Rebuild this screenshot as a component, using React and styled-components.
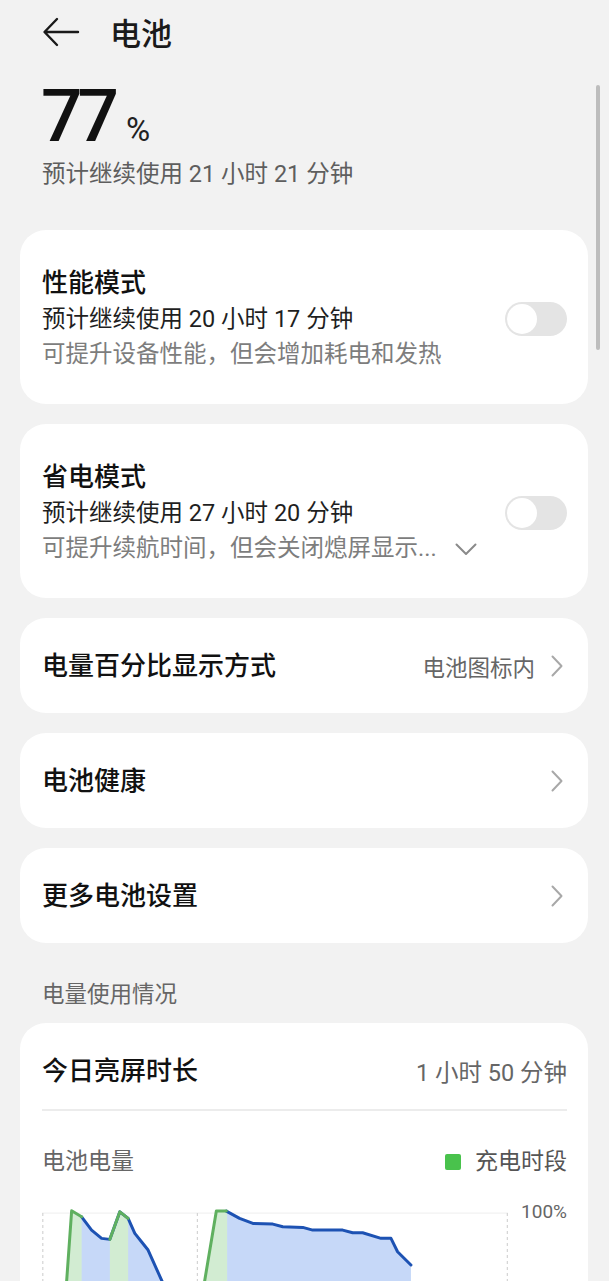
import React from "react";
import styled, { createGlobalStyle } from "styled-components";

const GlobalStyle = createGlobalStyle`
  html, body {
    margin: 0;
    padding: 0;
    overflow: hidden;
    background: #f2f2f2;
  }
  body {
    font-family: Roboto, "Noto Sans CJK SC", sans-serif;
    -webkit-font-smoothing: antialiased;
  }
`;

const modes = [
  {
    title: "性能模式",
    est: "预计继续使用 20 小时 17 分钟",
    desc: "可提升设备性能，但会增加耗电和发热",
    more: false,
  },
  {
    title: "省电模式",
    est: "预计继续使用 27 小时 20 分钟",
    desc: "可提升续航时间，但会关闭熄屏显示...",
    more: true,
  },
];

const links = [
  { label: "电量百分比显示方式", value: "电池图标内" },
  { label: "电池健康" },
  { label: "更多电池设置" },
];

const BackArrow = () => (
  <svg width="38" height="30" viewBox="0 0 38 30">
    <path
      d="M36 15 H3 M15 2 L2.5 15 L15 28"
      fill="none"
      stroke="#1a1a1a"
      strokeWidth="2.4"
      strokeLinecap="round"
      strokeLinejoin="round"
    />
  </svg>
);

const ChevronRight = () => (
  <svg width="12" height="22" viewBox="0 0 12 22">
    <path
      d="M1.5 1.5 L10.5 11 L1.5 20.5"
      fill="none"
      stroke="#a8a8a8"
      strokeWidth="2"
      strokeLinecap="round"
      strokeLinejoin="round"
    />
  </svg>
);

const ChevronDown = () => (
  <svg width="22" height="13" viewBox="0 0 22 13">
    <path
      d="M1.5 1.5 L11 11 L20.5 1.5"
      fill="none"
      stroke="#8a8a8a"
      strokeWidth="2"
      strokeLinecap="round"
      strokeLinejoin="round"
    />
  </svg>
);

const BLUE = "#1d52b3";
const GREEN = "#5fb05f";
const pts = (a) => a.map((p) => p.join(",")).join(" ");

const seg1 = [
  [20.5, 140], [29.7, 10.7], [39.7, 16.7], [49.7, 30], [59.7, 38.3], [68, 39.3],
  [78, 11.7], [86.3, 18.3], [93, 33.3], [99.7, 41.7], [106.3, 50], [119.7, 80], [146.5, 140],
];
const seg2 = [
  [153.1, 140], [174.7, 11], [184.7, 11], [198, 18.3], [211.3, 23.3], [231.3, 24],
  [241.3, 26.7], [261.3, 27.3], [271.3, 30], [301.3, 30], [311.3, 32.7], [321.3, 32.7],
  [339.7, 38.3], [349.7, 38.3], [356.3, 51.7], [369.7, 65],
];

const BatteryChart = () => (
  <svg width="468" height="140" viewBox="0 0 468 140">
    <line x1="0" y1="13" x2="467" y2="13" stroke="#efefef" strokeWidth="1" />
    {[0.8, 155.7, 466.3].map((x) => (
      <line key={x} x1={x} y1="13" x2={x} y2="140" stroke="#d4d4d4" strokeWidth="1.2" strokeDasharray="3 3" />
    ))}
    <polygon points={pts(seg1)} fill="#c6d8f8" />
    <polygon points={pts([...seg2, [369.7, 140]])} fill="#c6d8f8" />
    <polygon points={pts([[20.5, 140], [29.7, 10.7], [39.7, 16.7], [39.7, 140]])} fill="#d2ecd2" />
    <polygon points={pts([[68, 140], [68, 39.3], [78, 11.7], [86.3, 18.3], [86.3, 140]])} fill="#d2ecd2" />
    <polygon points={pts([[153.1, 140], [174.7, 11], [185.5, 11], [185.5, 140]])} fill="#d2ecd2" />
    <g fill="none" strokeWidth="3" strokeLinejoin="round" strokeLinecap="round">
      <polyline points={pts(seg1.slice(2))} stroke={BLUE} />
      <polyline points={pts(seg2.slice(2))} stroke={BLUE} />
      <polyline points={pts(seg1.slice(0, 3))} stroke={GREEN} />
      <polyline points={pts(seg1.slice(5, 8))} stroke={GREEN} />
      <polyline points={pts(seg2.slice(0, 3))} stroke={GREEN} />
    </g>
  </svg>
);

const App = () => {
  return (
    <Page>
      <GlobalStyle />
      <Scrollbar />
      <Header>
        <BackArrow />
        <HeaderTitle>电池</HeaderTitle>
      </Header>

      <Hero>
        <Level>77</Level>
        <Percent>%</Percent>
      </Hero>
      <HeroSub>预计继续使用 21 小时 21 分钟</HeroSub>

      <Cards>
        {modes.map((m) => (
          <ModeCard key={m.title}>
            <ModeText>
              <CardTitle>{m.title}</CardTitle>
              <Estimate>{m.est}</Estimate>
              <Desc>
                {m.desc}
                {m.more && (
                  <MoreIcon>
                    <ChevronDown />
                  </MoreIcon>
                )}
              </Desc>
            </ModeText>
            <Toggle>
              <Knob />
            </Toggle>
          </ModeCard>
        ))}

        {links.map((l) => (
          <LinkCard key={l.label}>
            <CardTitle>{l.label}</CardTitle>
            <LinkRight>
              {l.value && <LinkValue>{l.value}</LinkValue>}
              <ChevronRight />
            </LinkRight>
          </LinkCard>
        ))}
      </Cards>

      <SectionLabel>电量使用情况</SectionLabel>

      <UsageCard>
        <UsageRow>
          <CardTitle>今日亮屏时长</CardTitle>
          <UsageValue>1 小时 50 分钟</UsageValue>
        </UsageRow>
        <Divider />
        <ChartHead>
          <ChartLabel>电池电量</ChartLabel>
          <Legend>
            <Swatch />
            充电时段
          </Legend>
        </ChartHead>
        <ChartRow>
          <BatteryChart />
          <AxisLabel>100%</AxisLabel>
        </ChartRow>
      </UsageCard>
    </Page>
  );
};

const Page = styled.div`
  position: relative;
  padding: 0 21px 0 20px;
  color: #1a1a1a;
`;

const Scrollbar = styled.div`
  position: absolute;
  top: 85px;
  right: 9px;
  width: 4px;
  height: 265px;
  border-radius: 2px;
  background: #bdbdbd;
`;

const Header = styled.div`
  height: 64px;
  display: flex;
  align-items: center;
  padding-left: 22px;
`;

const HeaderTitle = styled.div`
  margin-left: 30px;
  font-size: 31px;
  font-weight: 500;
  line-height: 40px;
  font-family: "Noto Sans CJK SC", sans-serif;
`;

const Hero = styled.div`
  display: flex;
  align-items: baseline;
  padding-left: 21px;
  margin-top: 16px;
`;

const Level = styled.span`
  font-family: Roboto, sans-serif;
  font-size: 73px;
  font-weight: 500;
  line-height: 73px;
  letter-spacing: -5px;
  color: #111;
`;

const Percent = styled.span`
  margin-left: 12px;
  font-family: Roboto, sans-serif;
  font-size: 33px;
  color: #222;
`;

const HeroSub = styled.div`
  padding-left: 22px;
  margin-top: 4px;
  font-size: 23.5px;
  line-height: 34px;
  color: #5e5e5e;
`;

const Cards = styled.div`
  margin-top: 39px;
  display: flex;
  flex-direction: column;
  gap: 20px;
`;

const Card = styled.div`
  background: #fff;
  border-radius: 26px;
`;

const ModeCard = styled(Card)`
  display: flex;
  align-items: center;
  justify-content: space-between;
  padding: 35px 21px 32px 22px;
`;

const ModeText = styled.div`
  display: flex;
  flex-direction: column;
`;

const CardTitle = styled.div`
  font-size: 26px;
  font-weight: 500;
  line-height: 36px;
  color: #111;
`;

const Estimate = styled.div`
  font-size: 23.5px;
  line-height: 36px;
  color: #1f1f1f;
`;

const Desc = styled.div`
  display: flex;
  align-items: center;
  font-size: 23.5px;
  line-height: 35px;
  color: #7d7d7d;
`;

const MoreIcon = styled.span`
  display: inline-flex;
  margin-left: 18px;
  margin-top: 2px;
`;

const Toggle = styled.div`
  width: 62px;
  height: 34px;
  border-radius: 17px;
  background: #e4e4e4;
  display: flex;
  align-items: center;
  padding: 0 2px;
  box-sizing: border-box;
`;

const Knob = styled.div`
  width: 30px;
  height: 30px;
  border-radius: 50%;
  background: #fff;
`;

const LinkCard = styled(Card)`
  height: 95px;
  display: flex;
  align-items: center;
  justify-content: space-between;
  padding: 0 25px 0 22px;
`;

const LinkRight = styled.div`
  display: flex;
  align-items: center;
  gap: 16px;
`;

const LinkValue = styled.span`
  font-size: 22.5px;
  color: #666;
`;

const SectionLabel = styled.div`
  padding-left: 22px;
  margin-top: 36px;
  margin-bottom: 14px;
  font-size: 22.5px;
  line-height: 30px;
  color: #666;
`;

const UsageCard = styled(Card)`
  padding: 30px 21px 40px 22px;
`;

const UsageRow = styled.div`
  display: flex;
  align-items: center;
  justify-content: space-between;
  padding-bottom: 20px;
`;

const UsageValue = styled.span`
  font-size: 23.5px;
  color: #666;
`;

const Divider = styled.div`
  height: 2px;
  background: #ececec;
`;

const ChartHead = styled.div`
  margin-top: 34px;
  display: flex;
  align-items: center;
  justify-content: space-between;
  line-height: 34px;
`;

const ChartLabel = styled.span`
  font-size: 23px;
  color: #666;
`;

const Legend = styled.span`
  display: flex;
  align-items: center;
  gap: 14px;
  font-size: 23px;
  color: #555;
`;

const Swatch = styled.span`
  width: 16px;
  height: 16px;
  border-radius: 2px;
  background: #49c24c;
`;

const ChartRow = styled.div`
  margin-top: 21px;
  display: flex;
  align-items: flex-start;
`;

const AxisLabel = styled.span`
  margin-left: 12px;
  font-size: 19px;
  line-height: 24px;
  color: #666;
`;

export default App;
